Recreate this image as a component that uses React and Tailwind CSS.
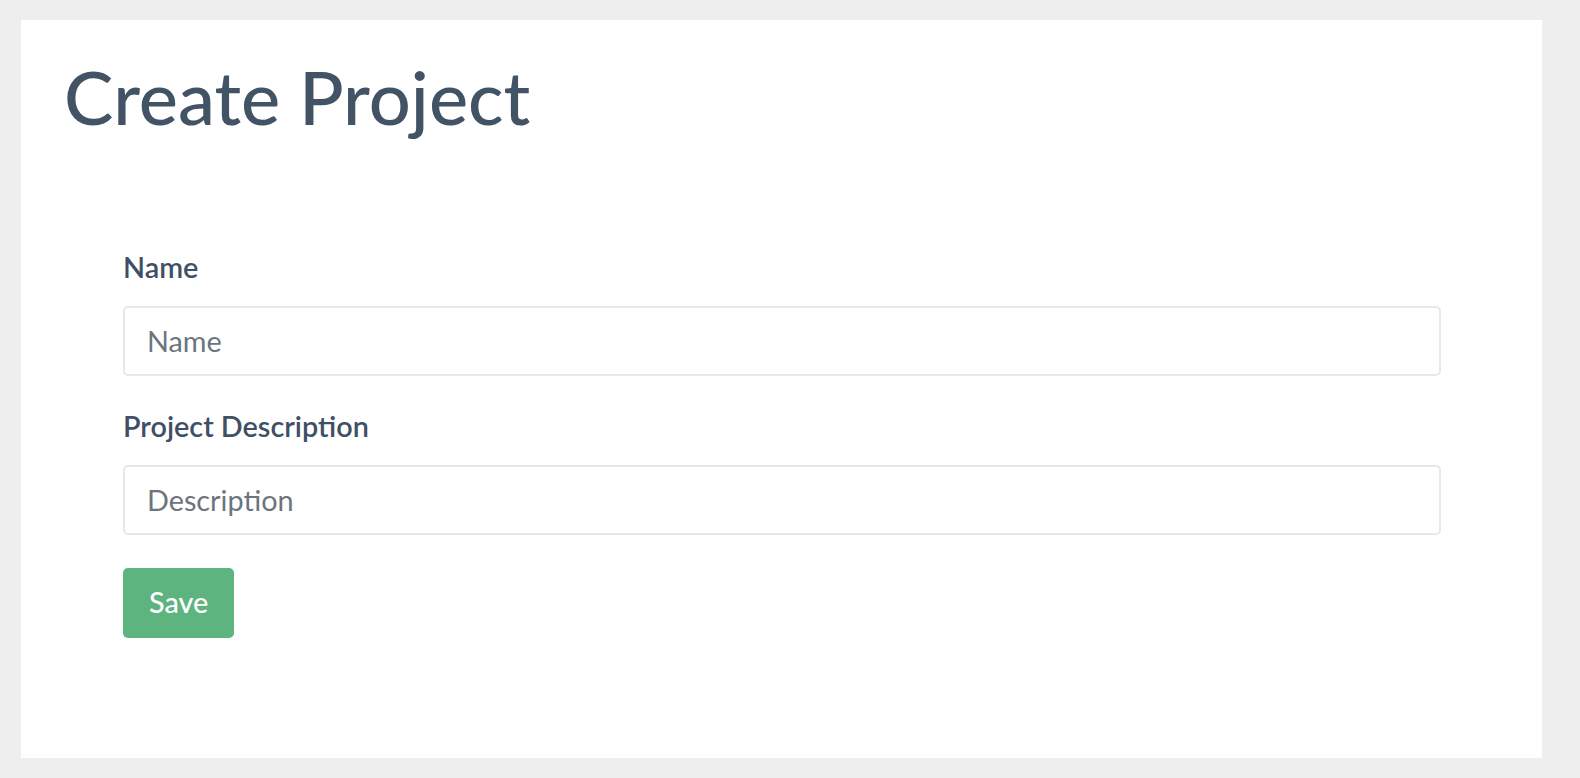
import React from 'react'

const font = { fontFamily: 'Lato, "Noto Sans", sans-serif' }

const Field = ({ label, placeholder, className }) => {
  return (
    <div className={className}>
      <label className="block text-[28.8px] leading-[43px] font-semibold text-[#3f5066] mb-[17px]">{label}</label>
      <input
        type="text"
        placeholder={placeholder}
        className="block w-full h-[70px] border-2 border-[#e7e8ec] rounded-[5px] px-[22px] text-[28.8px] text-[#495057] placeholder:text-[#6c757d] focus:outline-0"
      />
    </div>
  )
}

const App = () => {
  return (
    <div className="min-h-screen bg-[#eeeeee] pt-5 pb-5 pl-[21px] pr-[38px]" style={font}>
      <div className="bg-white h-[738px] pt-[33px]">
        <h1 className="pl-[43px] text-[74px] leading-[88px] font-medium text-[#435366]">Create Project</h1>

        <form className="pl-[102px] pr-[101px] mt-[105px]">
          <Field label="Name" placeholder="Name" className="mb-[29px]" />
          <Field label="Project Description" placeholder="Description" className="mb-[33px]" />
          <button type="submit" className="h-[70px] px-[26px] rounded-[5px] bg-[#5db47f] text-white text-[28.8px] font-medium">Save</button>
        </form>
      </div>
    </div>
  )
}

export default App
